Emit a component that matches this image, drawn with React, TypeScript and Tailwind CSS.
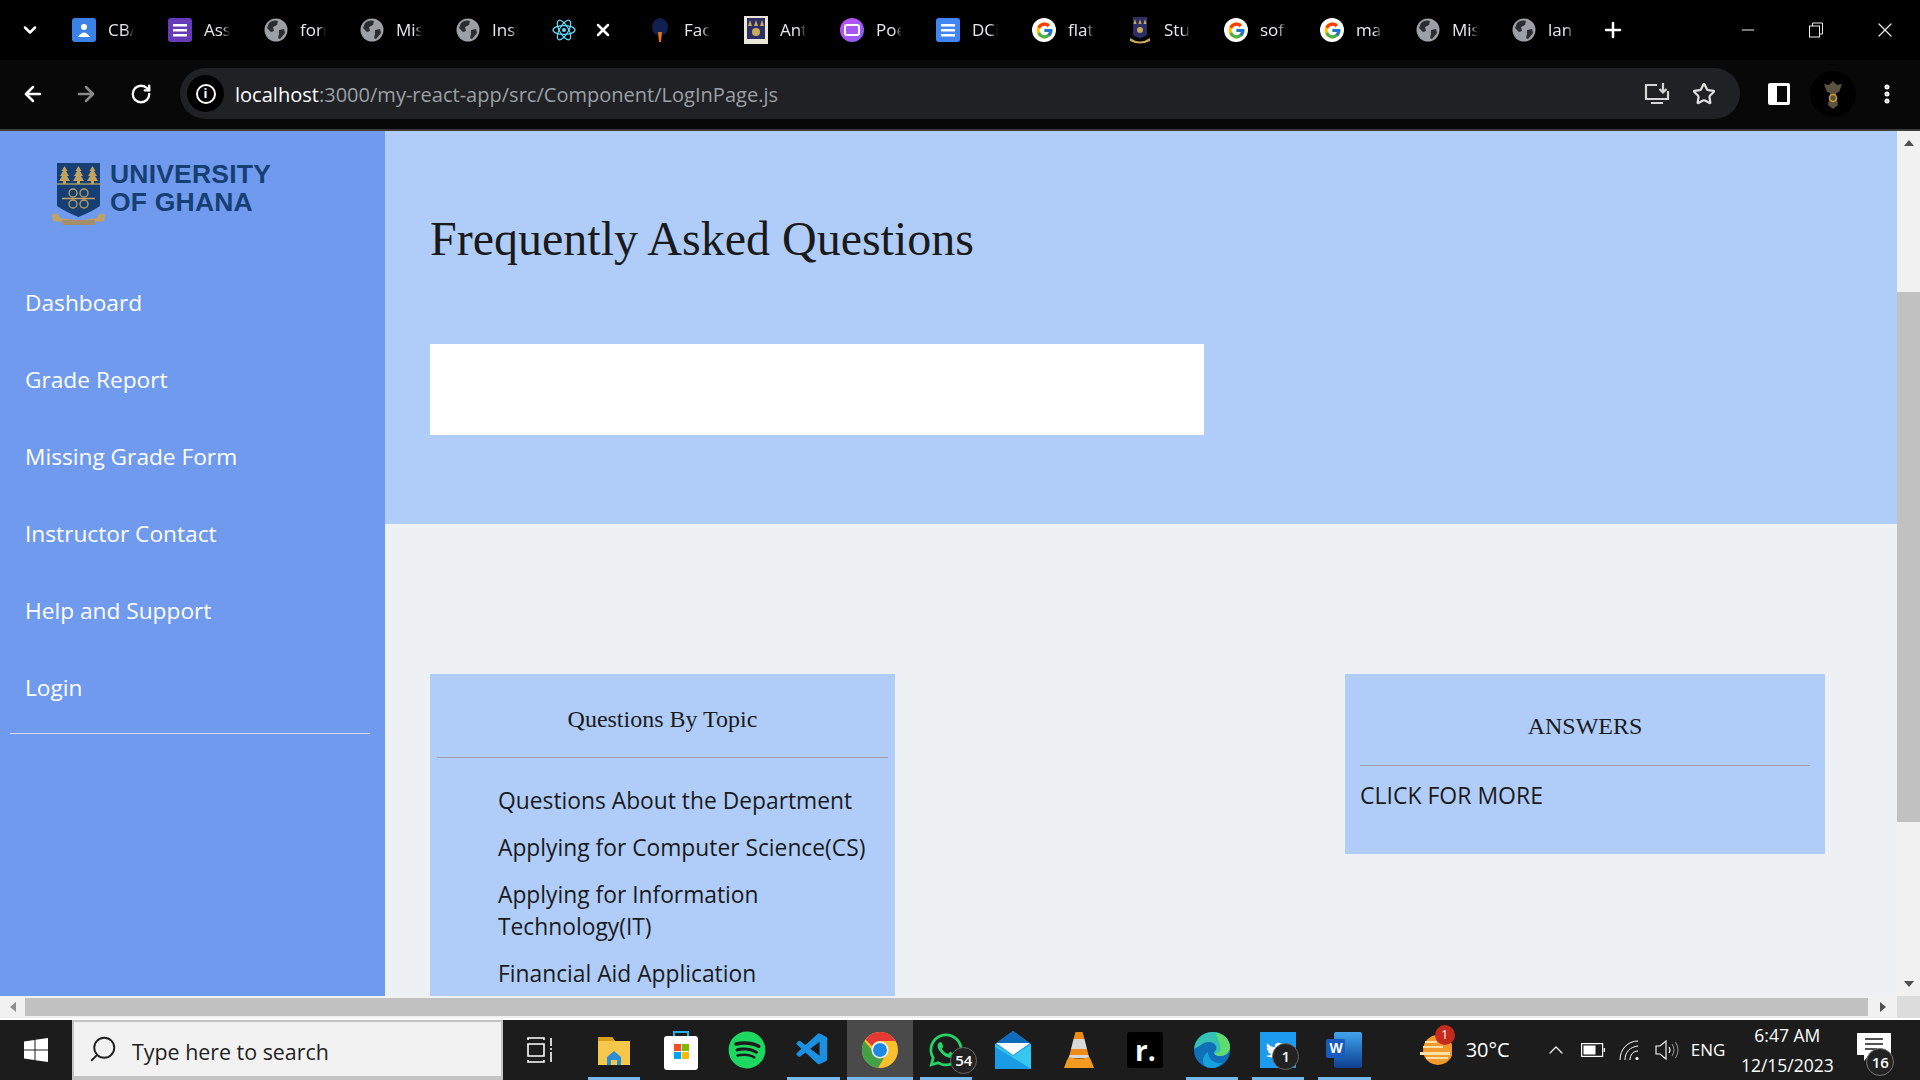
import {
  ArrowLeft,
  ArrowRight,
  ChevronDown,
  ChevronUp,
  Minus,
  MoreVertical,
  Plus,
  RotateCw,
  Search,
  Star,
  X,
} from "lucide-react";
import { FaSpotify, FaTwitter, FaWhatsapp } from "react-icons/fa";
import { FcGoogle } from "react-icons/fc";
import { VscVscode } from "react-icons/vsc";

const NAV = ["Dashboard", "Grade Report", "Missing Grade Form", "Instructor Contact", "Help and Support", "Login"];

function Globe() {
  return (
    <svg viewBox="0 0 24 24" className="h-6 w-6">
      <circle cx="12" cy="12" r="11.5" fill="#9aa0a6" />
      <path d="M5 5c3-3 7-3 9-2l-1 4-4 2 1 4-3 1-4-4zM15 12l5-1 1 4-5 6-2-1 1-4z" fill="#2b2c2f" />
    </svg>
  );
}

function DocIcon({ color }: { color: string }) {
  return (
    <svg viewBox="0 0 24 24" className="h-6 w-6">
      <rect x="0" y="0" width="24" height="24" rx="3" fill={color} />
      <rect x="5" y="6" width="14" height="2.5" fill="#fff" />
      <rect x="5" y="11" width="14" height="2.5" fill="#fff" />
      <rect x="5" y="16" width="14" height="2.5" fill="#fff" />
    </svg>
  );
}

function ReactIcon() {
  return (
    <svg viewBox="0 0 24 24" className="h-6 w-6" fill="none" stroke="#61dafb" strokeWidth="1.2">
      <circle cx="12" cy="12" r="2" fill="#61dafb" stroke="none" />
      <ellipse cx="12" cy="12" rx="11" ry="4.4" />
      <ellipse cx="12" cy="12" rx="11" ry="4.4" transform="rotate(60 12 12)" />
      <ellipse cx="12" cy="12" rx="11" ry="4.4" transform="rotate(120 12 12)" />
    </svg>
  );
}

function Crest({ dark }: { dark?: boolean }) {
  return dark ? (
    <svg viewBox="0 0 24 28" className="h-7 w-6">
      <path d="M5 1h14v18q-7 6-14 0z" fill="#2c2f63" />
      <path d="M7 3l1.5 5h-3zM12 3l1.5 5h-3zM17 3l1.5 5h-3z" fill="#c9a95c" />
      <circle cx="12" cy="14" r="3" fill="#c9a95c" />
      <path d="M2 22q10 7 20 0v3q-10 5-20 0z" fill="#c9a95c" />
    </svg>
  ) : (
    <svg viewBox="0 0 24 28" className="h-7 w-6">
      <rect width="24" height="28" fill="#ece6d8" />
      <rect x="3" y="2" width="18" height="21" fill="#2c2f63" />
      <path d="M6 4l2 6H4zM12 4l2 6h-4zM18 4l2 6h-4z" fill="#c9a95c" />
      <circle cx="12" cy="16" r="4" fill="#c9a95c" />
    </svg>
  );
}

function GoogleFav() {
  return (
    <span className="flex h-6 w-6 items-center justify-center rounded-full bg-white">
      <FcGoogle className="h-[19px] w-[19px]" />
    </span>
  );
}

const TABS = [
  {
    label: "CB/",
    icon: (
      <svg viewBox="0 0 24 24" className="h-6 w-6">
        <rect width="24" height="24" rx="3" fill="#3b82e6" />
        <circle cx="12" cy="9" r="3" fill="#fff" />
        <path d="M6 19q6-9 12 0z" fill="#fff" />
      </svg>
    ),
  },
  { label: "Ass", icon: <DocIcon color="#673ab7" /> },
  { label: "forn", icon: <Globe /> },
  { label: "Mis", icon: <Globe /> },
  { label: "Inst", icon: <Globe /> },
  { label: "", icon: <ReactIcon />, active: true },
  {
    label: "Fac",
    icon: (
      <svg viewBox="0 0 24 24" className="h-6 w-6">
        <ellipse cx="12" cy="9" rx="8" ry="9" fill="#10204f" />
        <path d="M10 14h4l-1 10h-2z" fill="#e0761f" />
      </svg>
    ),
  },
  { label: "Ant", icon: <Crest /> },
  {
    label: "Poe",
    icon: (
      <span className="flex h-6 w-6 items-center justify-center rounded-full bg-gradient-to-br from-[#c04cf5] to-[#8a5cf6]">
        <span className="h-3 w-4 rounded-[3px] border-2 border-white" />
      </span>
    ),
  },
  { label: "DCI", icon: <DocIcon color="#4285f4" /> },
  { label: "flat", icon: <GoogleFav /> },
  { label: "Stu", icon: <Crest dark /> },
  { label: "soft", icon: <GoogleFav /> },
  { label: "ma", icon: <GoogleFav /> },
  { label: "Mis", icon: <Globe /> },
  { label: "lan", icon: <Globe /> },
];

function TabStrip() {
  return (
    <div className="flex h-[60px] items-center bg-black">
      <div className="flex w-[60px] justify-center">
        <ChevronDown className="h-5 w-5 text-white" strokeWidth={3} />
      </div>
      {TABS.map((tab, i) => (
        <div key={i} className="flex w-[96px] items-center gap-3 pl-3">
          {tab.icon}
          {tab.active ? (
            <X className="ml-[5px] h-5 w-5 text-white" strokeWidth={3} />
          ) : (
            <span className="w-[26px] overflow-hidden whitespace-nowrap text-[17px] text-[#e8eaed] [font-family:'Open_Sans',sans-serif] [mask-image:linear-gradient(to_right,black_70%,transparent)]">
              {tab.label}
            </span>
          )}
        </div>
      ))}
      <Plus className="ml-[5px] h-6 w-6 text-white" strokeWidth={2.5} />
      <div className="ml-auto flex items-center">
        <div className="flex w-[68px] justify-center">
          <Minus className="h-5 w-5 text-[#eee]" strokeWidth={1.2} />
        </div>
        <div className="flex w-[68px] justify-center">
          <svg viewBox="0 0 16 16" className="h-4 w-4" fill="none" stroke="#eee" strokeWidth="1">
            <rect x="1.5" y="4" width="10" height="11" />
            <path d="M4.5 4V1h10v11h-3" />
          </svg>
        </div>
        <div className="flex w-[70px] justify-center">
          <X className="h-6 w-6 text-[#eee]" strokeWidth={1.2} />
        </div>
      </div>
    </div>
  );
}

function Toolbar() {
  return (
    <div className="flex h-[71px] items-center border-b-2 border-[#3c3c3c] bg-[#080808] pb-[2px]">
      <div className="flex w-[180px] shrink-0 items-center pl-[21px]">
        <ArrowLeft className="h-6 w-6 text-white" strokeWidth={2.5} />
        <ArrowRight className="ml-[29px] h-6 w-6 text-[#8a8a8a]" strokeWidth={2.5} />
        <RotateCw className="ml-[32px] h-[22px] w-[22px] text-white" strokeWidth={2.5} />
      </div>
      <div className="flex h-[51px] w-[1560px] shrink-0 items-center rounded-full bg-[#202124] pl-[7px]">
        <span className="flex h-[37px] w-[37px] items-center justify-center rounded-full bg-black">
          <span className="flex h-[20px] w-[20px] items-center justify-center rounded-full border-2 border-white text-[13px] font-bold leading-none text-white">
            i
          </span>
        </span>
        <span className="ml-[11px] pt-[3px] text-[20.05px] text-[#9aa0a6] [font-family:'Open_Sans',sans-serif]">
          <span className="text-white">localhost</span>:3000/my-react-app/src/Component/LogInPage.js
        </span>
        <svg viewBox="0 0 26 24" className="ml-auto h-6 w-[26px]" fill="none" stroke="#d6d6d6" strokeWidth="2.2">
          <path d="M13 3H2v14h22V9M7 21h12M19 1v9M15.5 7l3.5 3.5L22.5 7" />
        </svg>
        <Star className="ml-[22px] mr-[24px] h-6 w-6 text-[#e0e0e0]" strokeWidth={2.2} />
      </div>
      <div className="flex flex-1 items-center">
        <span className="ml-[28px] flex h-[22px] w-[22px] justify-end rounded-[2px] border-[3px] border-white bg-white">
          <span className="h-full w-[10px] bg-[#080808]" />
        </span>
        <span className="ml-[20px] flex h-[46px] w-[46px] items-center justify-center rounded-full bg-black">
          <svg viewBox="0 0 20 30" className="h-[30px] w-5">
            <path d="M10 2l4 4 5-1-3 8-3 1 2 12-5 4-5-4 2-12-3-1-3-8 5 1z" fill="#5b5340" />
            <circle cx="10" cy="19" r="3.5" fill="none" stroke="#c9a028" strokeWidth="1.5" />
          </svg>
        </span>
        <MoreVertical className="ml-[19px] h-6 w-6 text-white" strokeWidth={3} />
      </div>
    </div>
  );
}

function Tree({ x }: { x: number }) {
  return (
    <path
      d={`M${x} 3l3 5-1.5 0 3 5-2 0 3 5h-4v3h-3v-3h-4l3-5h-2l3-5h-1.5z`}
      fill="#c3a15f"
    />
  );
}

function Logo() {
  return (
    <div className="flex h-[106px] items-start pl-[52px] pt-[32px]">
      <svg viewBox="0 0 54 64" className="h-[64px] w-[54px]">
        <path d="M5 0h43v43q-9 6-21.5 11Q14 49 5 43z" fill="#163f73" />
        <rect x="5" y="20" width="43" height="2" fill="#7c8463" />
        <Tree x={12.5} />
        <Tree x={26.5} />
        <Tree x={40.5} />
        <g fill="none" stroke="#c3a15f" strokeWidth="1.3">
          <circle cx="21" cy="30" r="4" />
          <circle cx="32" cy="30" r="4" />
          <circle cx="21" cy="41" r="4" />
          <circle cx="32" cy="41" r="4" />
          <path d="M10 35.5h33" strokeWidth="1.6" />
        </g>
        <path d="M0 52q3-2 6-1l2 4q18 4 37 0l2-4q4-1 6 1l-1 6-6 1-1-1q-16 4-36 0l-2 1-6-1z" fill="#c3a15f" />
        <rect x="10" y="57" width="33" height="5" fill="#a58f6a" />
      </svg>
      <div className="-mt-[3px] ml-[4px] text-[26.5px] font-bold leading-[28px] tracking-[0.2px] text-[#163f73] [font-family:'Liberation_Sans',sans-serif]">
        UNIVERSITY
        <br />
        OF GHANA
      </div>
    </div>
  );
}

function Sidebar() {
  return (
    <aside className="w-[385px] shrink-0 bg-[#6f9aee] [font-family:'Open_Sans',sans-serif]">
      <Logo />
      <ul className="mt-[49px] flex flex-col gap-[44px] pl-[25px] text-[22.7px] leading-[33px] text-white">
        {NAV.map((item) => (
          <li key={item}>{item}</li>
        ))}
      </ul>
      <hr className="ml-[10px] mr-[15px] mt-[29px] border-t border-[#d3def3]" />
    </aside>
  );
}

function MainContent() {
  return (
    <main className="min-w-0 flex-1 overflow-hidden bg-[#eef1f4]">
      <section className="h-[393px] bg-[#b0cdfa] pl-[45px] pt-[78px]">
        <h1 className="text-[48px] leading-[60px] text-[#1a1a1a] [font-family:'Liberation_Serif',serif]">
          Frequently Asked Questions
        </h1>
        <div className="mt-[75px] h-[91px] w-[774px] bg-white" />
      </section>
      <div className="flex items-start justify-between pl-[45px] pr-[72px] pt-[150px]">
        <div className="h-[322px] w-[465px] overflow-hidden bg-[#b0cdfa] px-[7px]">
          <h2 className="pt-[30px] text-center text-[24px] leading-[30px] text-[#1a1a1a] [font-family:'Liberation_Serif',serif]">
            Questions By Topic
          </h2>
          <hr className="mt-[23px] border-t border-[#9c9fa8]" />
          <ul className="mt-[27px] flex flex-col gap-[15px] pl-[61px] text-[22.8px] leading-[32px] text-[#1a1a1a] [font-family:'Open_Sans',sans-serif]">
            <li>Questions About the Department</li>
            <li>Applying for Computer Science(CS)</li>
            <li>
              Applying for Information
              <br />
              Technology(IT)
            </li>
            <li>Financial Aid Application</li>
          </ul>
        </div>
        <div className="h-[180px] w-[480px] bg-[#b0cdfa] px-[15px]">
          <h2 className="pt-[38px] text-center text-[24px] leading-[28px] text-[#1a1a1a] [font-family:'Liberation_Serif',serif]">
            ANSWERS
          </h2>
          <hr className="mt-[25px] border-t border-[#9c9fa8]" />
          <p className="mt-[13px] text-[23px] leading-[32px] text-[#1a1a1a] [font-family:'Open_Sans',sans-serif]">
            CLICK FOR MORE
          </p>
        </div>
      </div>
    </main>
  );
}

function VerticalScrollbar() {
  return (
    <div className="flex w-[23px] shrink-0 flex-col items-center bg-[#f1f1f1]">
      <div className="flex h-[24px] items-center">
        <span className="h-0 w-0 border-x-[5px] border-b-[6px] border-x-transparent border-b-[#505050]" />
      </div>
      <div className="mt-[137px] h-[530px] w-full bg-[#c1c1c1]" />
      <div className="mt-auto flex h-[24px] items-center">
        <span className="h-0 w-0 border-x-[5px] border-t-[6px] border-x-transparent border-t-[#505050]" />
      </div>
    </div>
  );
}

function HorizontalScrollbar() {
  return (
    <div className="flex h-[24px] border-b-2 border-white bg-[#f1f1f1]">
      <div className="flex w-[25px] items-center justify-center">
        <span className="h-0 w-0 border-y-[5px] border-r-[6px] border-y-transparent border-r-[#909090]" />
      </div>
      <div className="my-[2px] w-[1843px] bg-[#c1c1c1]" />
      <div className="flex w-[29px] items-center justify-center">
        <span className="h-0 w-0 border-y-[5px] border-l-[6px] border-y-transparent border-l-[#505050]" />
      </div>
      <div className="flex-1 bg-[#dcdcdc]" />
    </div>
  );
}

type App = {
  icon: React.ReactNode;
  open?: boolean;
  active?: boolean;
  badge?: string;
  badgeClass?: string;
};

const APPS: App[] = [
  {
    open: true,
    icon: (
      <svg viewBox="0 0 32 30" className="h-[30px] w-8">
        <path d="M0 2h14l3 4h15v24H0z" fill="#f5c84b" />
        <path d="M0 2h14l3 4H0z" fill="#d99f1c" />
        <path d="M9 22l7-6 7 6v8h-4v-5h-6v5H9z" fill="#2b8fd8" />
      </svg>
    ),
  },
  {
    icon: (
      <svg viewBox="0 0 34 40" className="h-10 w-[34px]">
        <path d="M10 6V2h14v4" fill="none" stroke="#25b0e8" strokeWidth="2" />
        <rect y="6" width="34" height="34" rx="3" fill="#fff" />
        <rect x="10" y="14" width="7" height="7" fill="#f25022" />
        <rect x="18" y="14" width="7" height="7" fill="#7fba00" />
        <rect x="10" y="22" width="7" height="7" fill="#00a4ef" />
        <rect x="18" y="22" width="7" height="7" fill="#ffb900" />
      </svg>
    ),
  },
  { icon: <FaSpotify className="h-[38px] w-[38px] text-[#1ed760]" /> },
  { open: true, icon: <VscVscode className="h-[38px] w-[38px] text-[#1b8fe0]" /> },
  {
    open: true,
    active: true,
    icon: (
      <svg viewBox="0 0 36 36" className="h-9 w-9">
        <circle cx="18" cy="18" r="18" fill="#fbc02d" />
        <path d="M18 0a18 18 0 0 1 15.6 9H18a9 9 0 0 0-8 5L3.5 7.5A18 18 0 0 1 18 0z" fill="#e53935" />
        <path d="M2.4 9A18 18 0 0 0 16 36l7-12a9 9 0 0 1-13-6z" fill="#43a047" />
        <circle cx="18" cy="18" r="8.5" fill="#fff" />
        <circle cx="18" cy="18" r="7" fill="#1e88e5" />
      </svg>
    ),
  },
  {
    open: true,
    badge: "54",
    badgeClass: "bottom-[6px] right-[2px]",
    icon: <FaWhatsapp className="h-[38px] w-[38px] text-[#25d366]" />,
  },
  {
    icon: (
      <svg viewBox="0 0 36 38" className="h-[38px] w-9">
        <path d="M18 0l18 13v25H0V13z" fill="#1a9be6" />
        <path d="M18 0l18 13H0z" fill="#0f6cbd" />
        <path d="M1 12h34L18 24z" fill="#fff" />
        <path d="M0 13l18 12 18-12v25L0 16z" fill="#37c6ee" />
        <path d="M0 16l36 22H0z" fill="#1a9be6" />
      </svg>
    ),
  },
  {
    icon: (
      <svg viewBox="0 0 30 36" className="h-9 w-[30px]">
        <path d="M11.5 0h7l2 7h-11z" fill="#f08a16" />
        <path d="M9.5 7h11l2.5 10H7z" fill="#d8d8d8" />
        <path d="M7 17h16l1.5 6h-19z" fill="#f08a16" />
        <path d="M5.5 23h19l1 3h-21z" fill="#d8d8d8" />
        <path d="M3 28l2-3q10 3 20 0l2 3 3 8H0z" fill="#f29a1f" />
      </svg>
    ),
  },
  {
    icon: (
      <span className="flex h-9 w-9 items-center justify-center rounded-[3px] bg-black text-[28px] font-bold leading-none text-white [font-family:'Open_Sans',sans-serif]">
        r.
      </span>
    ),
  },
  {
    open: true,
    icon: (
      <svg viewBox="0 0 36 36" className="h-9 w-9">
        <circle cx="18" cy="18" r="18" fill="#0f6fb8" />
        <path d="M0 17C1 7 9 0 19 0c10 0 17 7 17 15 0 6-5 9-10 9-4 0-6-2-6-4 2-1 3-3 2-6-2-4-7-5-12-3C6 13 2 16 0 17z" fill="#35c1b3" />
        <path d="M22 1c8 1 14 7 14 14 0 6-5 9-10 9-3 0-5-1-6-3 6 1 8-3 6-8-1-4-3-8-4-12z" fill="#5fdc6e" />
        <path d="M14 20c0 7 6 12 14 11-3 3-6 5-10 5-4 0-6-1-8-3-2-4-1-10 4-13z" fill="#18a0dc" />
      </svg>
    ),
  },
  {
    open: true,
    badge: "1",
    badgeClass: "bottom-[10px] right-[12px]",
    icon: (
      <span className="flex h-9 w-9 items-center justify-center bg-[#1d9bf0] pr-[6px]">
        <FaTwitter className="h-[18px] w-[18px] text-white" />
      </span>
    ),
  },
  {
    open: true,
    icon: (
      <span className="relative flex h-9 w-9 justify-end">
        <span className="h-9 w-[28px] rounded-[2px] bg-gradient-to-b from-[#41a5ee] to-[#103f91]" />
        <span className="absolute left-0 top-[7px] flex h-[19px] w-[19px] items-center justify-center rounded-[2px] bg-[#185abd] text-[14px] font-bold text-white [font-family:'Liberation_Sans',sans-serif]">
          W
        </span>
      </span>
    ),
  },
];

function Taskbar() {
  return (
    <footer className="flex h-[60px] items-stretch bg-[#1c1c1c] [font-family:'Open_Sans',sans-serif]">
      <div className="flex w-[72px] items-center justify-center">
        <svg viewBox="0 0 24 24" className="h-6 w-6" fill="#fff">
          <path d="M0 3.5L10.5 2v9.5H0zM11.5 1.8L24 0v11.5H11.5zM0 12.5h10.5V22L0 20.5zM11.5 12.5H24V24l-12.5-1.8z" />
        </svg>
      </div>
      <div className="flex w-[431px] items-center border-2 border-b-[4px] border-[#c4c4c4] bg-[#f2f2f2] pl-[14px] text-[21.4px] text-[#1f1f1f]">
        <Search className="h-[30px] w-[30px] -scale-x-100" strokeWidth={1.5} />
        <span className="ml-[14px] pt-[7px]">Type here to search</span>
      </div>
      <div className="flex w-[78px] items-center justify-center pr-[4px]">
        <svg viewBox="0 0 26 26" className="h-[26px] w-[26px]" fill="none" stroke="#fff" strokeWidth="1.6">
          <path d="M1 3V1h16v2M1 23v2h16v-2M24 1v8M24 15v10M1 7h16v12H1z" />
          <circle cx="24" cy="12" r="1" fill="#fff" stroke="none" />
        </svg>
      </div>
      {APPS.map((app, i) => (
        <div
          key={i}
          className={`relative flex w-[66.4px] items-center justify-center ${app.active ? "bg-[#4a4a4a]" : ""}`}
        >
          {app.icon}
          {app.badge && (
            <span
              className={`absolute flex h-[27px] min-w-[27px] items-center justify-center rounded-full border border-[#666] bg-[#222] px-[2px] text-[15px] font-semibold text-white ${app.badgeClass}`}
            >
              {app.badge}
            </span>
          )}
          {app.open && (
            <span className={`absolute bottom-0 h-[3px] bg-[#76b9ed] ${app.active ? "inset-x-0" : "inset-x-[7px]"}`} />
          )}
        </div>
      ))}
      <div className="ml-[42px] flex items-center">
        <span className="relative">
          <svg viewBox="0 0 32 36" className="h-9 w-8">
            <circle cx="18" cy="18" r="15" fill="#f29a2e" />
            <path d="M5 9h12v2H5zM3 14h20v2H3zM0 20h30v3H0zM6 25h22v2H6z" fill="#f7e1a5" />
          </svg>
          <span className="absolute -right-[3px] -top-[7px] flex h-[20px] w-[20px] items-center justify-center rounded-full bg-[#c42b1c] text-[12px] text-white">
            1
          </span>
        </span>
        <span className="ml-[14px] text-[20px] text-white">30°C</span>
        <ChevronUp className="ml-[34px] h-6 w-6 text-white" strokeWidth={1.2} />
        <svg viewBox="0 0 24 14" className="ml-[13px] h-[14px] w-6" fill="none" stroke="#fff" strokeWidth="1.2">
          <rect x="0.6" y="0.6" width="21" height="12.8" />
          <rect x="2.5" y="2.5" width="12" height="9" fill="#fff" stroke="none" />
          <path d="M23.4 5v4" strokeWidth="1.4" />
        </svg>
        <svg viewBox="0 0 22 22" className="ml-[14px] h-[22px] w-[22px]" fill="none" stroke="#fff" strokeWidth="1">
          <path d="M1 21C1 10 9 2 19 2M6 21c0-8 5-13 13-14M11 21c0-5 3-9 8-9" />
          <circle cx="18" cy="19.5" r="1.6" fill="#fff" stroke="none" />
        </svg>
        <svg viewBox="0 0 24 22" className="ml-[14px] h-[22px] w-6" fill="none" stroke="#fff" strokeWidth="1.1">
          <path d="M1 7h4l6-5v18l-6-5H1z" />
          <path d="M14 8q2 3 0 6" />
          <path d="M17 5q4 6 0 12M20.5 3q5 8 0 16" stroke="#8a8a8a" />
        </svg>
        <span className="ml-[12px] text-[17px] text-white">ENG</span>
        <div className="ml-[12px] w-[100px] text-center text-[17.5px] leading-[30px] text-white">
          <div>6:47 AM</div>
          <div>12/15/2023</div>
        </div>
      </div>
      <div className="relative ml-[20px] flex items-start pt-[13px]">
        <svg viewBox="0 0 34 28" className="h-[28px] w-[34px]" fill="#fff">
          <path d="M0 0h34v22H12l-5 6v-6H0z" />
          <path d="M8 6h18M8 11h18M8 16h12" stroke="#1c1c1c" strokeWidth="1.3" />
        </svg>
        <span className="absolute -right-[3px] bottom-[4px] flex h-[28px] w-[28px] items-center justify-center rounded-full border border-[#777] bg-[#222] text-[15px] font-semibold text-white">
          16
        </span>
      </div>
    </footer>
  );
}

export default function App() {
  return (
    <div className="flex h-screen w-full flex-col overflow-hidden bg-black">
      <TabStrip />
      <Toolbar />
      <div className="flex min-h-0 flex-1">
        <Sidebar />
        <MainContent />
        <VerticalScrollbar />
      </div>
      <HorizontalScrollbar />
      <Taskbar />
    </div>
  );
}
